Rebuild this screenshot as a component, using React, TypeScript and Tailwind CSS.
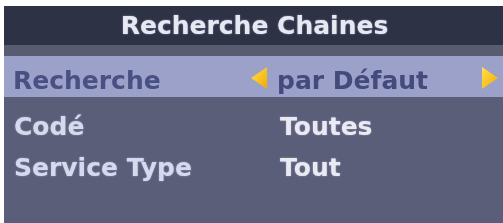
import React from 'react';

const rows = [
  { label: 'Codé', value: 'Toutes' },
  { label: 'Service Type', value: 'Tout' },
];

function Arrow({ dir }: { dir: 'left' | 'right' }) {
  return (
    <svg width="20" height="24" viewBox="0 0 20 24" className="shrink-0 blur-[0.6px]">
      <defs>
        <linearGradient id={`g-${dir}`} x1="0" y1="0" x2="1" y2="1">
          <stop offset="0" stopColor="#ffe34a" />
          <stop offset="1" stopColor="#f2a800" />
        </linearGradient>
      </defs>
      {dir === 'left' ? (
        <path d="M2 12 L18 1 L18 23 Z" fill={`url(#g-${dir})`} />
      ) : (
        <path d="M18 12 L2 1 L2 23 Z" fill={`url(#g-${dir})`} />
      )}
    </svg>
  );
}

export default function App() {
  return (
    <div className="w-[503px] h-[223px] bg-white pt-[6px] pl-[4px] overflow-hidden font-['DejaVu_Sans',sans-serif] font-bold">
      <div className="h-full flex flex-col bg-[#5b5e79]">
        <div className="h-[39px] bg-[#2e3245] flex items-center justify-center">
          <span className="text-[25px] leading-[25px] text-[#e6e9f2] [text-shadow:0_0_2px_rgba(200,210,255,0.6)] pl-[2px] blur-[0.3px]">Recherche Chaines</span>
        </div>
        <div className="h-[11px] bg-[#585c70]" />
        <div className="h-[41px] bg-[#9ca1ca] flex pt-[12px] pl-[9px] text-[#495083]">
          <span className="w-[236px] text-[25px] leading-[25px] blur-[0.4px]">Recherche</span>
          <div className="-mt-[2px]"><Arrow dir="left" /></div>
          <span className="w-[211px] text-[25px] leading-[25px] text-[#434a7c] pl-[8px] blur-[0.4px]">par Défaut</span>
          <div className="-mt-[2px]"><Arrow dir="right" /></div>
        </div>
        {rows.map((r, i) => (
          <div key={r.label} className={`flex pl-[10px] h-[43px] ${i === 0 ? 'pt-[17px]' : 'pt-[15px]'}`}>
            <span className="w-[266px] text-[25px] leading-[25px] text-[#d6daee] [text-shadow:0_0_2px_rgba(220,225,255,0.5)] blur-[0.3px]">{r.label}</span>
            <span className="text-[25px] leading-[25px] text-[#e9eaf2] [text-shadow:0_0_2px_rgba(220,225,255,0.5)] blur-[0.3px]">{r.value}</span>
          </div>
        ))}
      </div>
    </div>
  );
}
